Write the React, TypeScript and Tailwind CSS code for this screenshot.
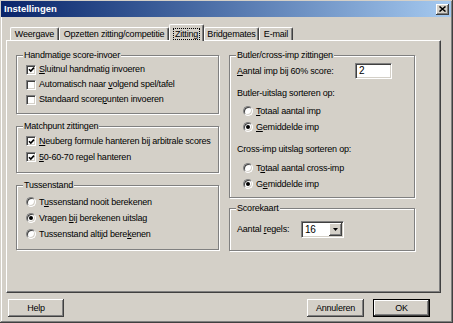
import type { ReactNode } from 'react';

function U({ children }: { children: ReactNode }) {
  return <span className="underline underline-offset-[1px] decoration-[1px]">{children}</span>;
}

function Check({ checked, children }: { checked?: boolean; children: ReactNode }) {
  return (
    <div className="flex items-center h-[15px] gap-[3px]">
      <span className="w-[10px] h-[10px] bg-white border border-t-[#808080] border-l-[#808080] border-b-white border-r-white shadow-[inset_1px_1px_0_#404040,inset_-1px_-1px_0_#d4d0c8] flex items-center justify-center shrink-0">
        {checked && (
          <svg width="7" height="7" viewBox="0 0 7 7">
            <path d="M1 3.2 L2.8 5 L6 1.6" fill="none" stroke="#000" strokeWidth={1.6} />
          </svg>
        )}
      </span>
      <span>{children}</span>
    </div>
  );
}

function Radio({ checked, children }: { checked?: boolean; children: ReactNode }) {
  return (
    <div className="flex items-center h-[16px] gap-[3px]">
      <span className="w-[10px] h-[10px] rounded-full bg-white border border-t-[#808080] border-l-[#808080] border-b-white border-r-white shadow-[inset_1px_1px_0_#404040,inset_-1px_-1px_0_#d4d0c8] flex items-center justify-center shrink-0">
        {checked && <span className="w-[4px] h-[4px] rounded-full bg-black" />}
      </span>
      <span>{children}</span>
    </div>
  );
}

function Group({ title, className, children }: { title: string; className: string; children: ReactNode }) {
  return (
    <div className={`relative border border-[#808080] shadow-[inset_1px_1px_0_#fff,1px_1px_0_#fff] ${className}`}>
      <span className="absolute left-[6px] -top-[6px] leading-[10px] px-[1px] bg-[#d4d0c8]">{title}</span>
      {children}
    </div>
  );
}

function Tab({ label, width, active }: { label: string; width: string; active?: boolean }) {
  if (active) {
    return (
      <div
        className={`relative z-10 h-[17px] -mb-[1px] bg-[#d4d0c8] border-l border-t border-white border-r border-r-[#404040] shadow-[inset_-1px_0_0_#808080] rounded-t-[2px] flex items-start justify-center pt-[3px] ${width}`}
      >
        <span className="border border-dotted border-black px-[1px] leading-[10px]">{label}</span>
      </div>
    );
  }
  return (
    <div
      className={`h-[13px] border-l border-t border-white border-r border-r-[#404040] shadow-[inset_-1px_0_0_#808080] rounded-t-[2px] flex items-center justify-center ${width}`}
    >
      {label}
    </div>
  );
}

function Btn({ children, isDefault, width }: { children: ReactNode; isDefault?: boolean; width: string }) {
  return (
    <div className={`h-[18px] ${width} ${isDefault ? 'border border-black' : ''}`}>
      <div className="w-full h-full flex items-center justify-center shadow-[inset_-1px_-1px_0_#404040,inset_1px_1px_0_#fff,inset_-2px_-2px_0_#808080,inset_2px_2px_0_#d4d0c8]">
        {children}
      </div>
    </div>
  );
}

export default function App() {
  return (
    <div className="w-[453px] h-[323px] bg-[#d4d0c8] font-['Liberation_Sans',Arial,sans-serif] text-[9px] tracking-[-0.2px] text-black leading-none shadow-[inset_-1px_-1px_0_#404040,inset_1px_1px_0_#d4d0c8,inset_-2px_-2px_0_#808080,inset_2px_2px_0_#fff] flex flex-col pt-[1px] px-[1px] overflow-hidden">
      {/* Title bar */}
      <div className="h-[16px] mr-[1px] flex items-center justify-between bg-gradient-to-r from-[#0a246a] to-[#a6caf0] pl-[3px] pr-[2px]">
        <span className="text-white font-bold text-[9.5px] tracking-[0px]">Instellingen</span>
        <div className="w-[13px] h-[11px] bg-[#d4d0c8] flex items-center justify-center shadow-[inset_-1px_-1px_0_#404040,inset_1px_1px_0_#fff,inset_-2px_-2px_0_#808080]">
          <svg width="7" height="6" viewBox="0 0 7 6">
            <path d="M0.5 0.5 L6.5 5.5 M6.5 0.5 L0.5 5.5" stroke="#000" strokeWidth={1.5} />
          </svg>
        </div>
      </div>

      {/* Tabs */}
      <div className="mt-[7px] h-[16px] flex items-end pl-[9px]">
        <Tab label="Weergave" width="w-[49px]" />
        <Tab label="Opzetten zitting/competitie" width="w-[110px]" />
        <Tab label="Zitting" width="w-[35px]" active />
        <Tab label="Bridgemates" width="w-[55px]" />
        <Tab label="E-mail" width="w-[34px]" />
      </div>

      {/* Panel */}
      <div className="ml-[5px] w-[435px] h-[253px] border-l border-t border-white border-r border-b border-r-[#404040] border-b-[#404040] shadow-[inset_-1px_-1px_0_#808080] flex gap-[10px] pl-[9px] pt-[14px]">
        {/* Left column */}
        <div className="w-[203px] flex flex-col gap-[12px]">
          <Group title="Handmatige score-invoer" className="h-[59px] pt-[6px] pl-[9px]">
            <Check checked>
              <U>S</U>luitnul handmatig invoeren
            </Check>
            <Check>
              Automatisch naar <U>v</U>olgend spel/tafel
            </Check>
            <Check>
              Standaard score<U>p</U>unten invoeren
            </Check>
          </Group>
          <Group title="Matchpunt zittingen" className="h-[47px] pt-[6px] pl-[9px]">
            <div className="flex flex-col [&>div]:h-[16px]">
              <Check checked>
                <U>N</U>euberg formule hanteren bij arbitrale scores
              </Check>
              <Check checked>
                <U>5</U>0-60-70 regel hanteren
              </Check>
            </div>
          </Group>
          <Group title="Tussenstand" className="h-[65px] pt-[8px] pl-[9px]">
            <Radio>
              T<U>u</U>ssenstand nooit berekenen
            </Radio>
            <Radio checked>
              Vragen <U>b</U>ij berekenen uitslag
            </Radio>
            <Radio>
              Tussenstand altijd bere<U>k</U>enen
            </Radio>
          </Group>
        </div>

        {/* Right column */}
        <div className="w-[186px] flex flex-col gap-[10px]">
          <Group title="Butler/cross-imp zittingen" className="h-[143px] pl-[7px] flex flex-col">
            <div className="mt-[7px] h-[16px] flex items-center">
              <span className="w-[118px]">
                <U>A</U>antal imp bij 60% score:
              </span>
              <div className="w-[37px] h-[16px] bg-white border border-t-[#808080] border-l-[#808080] border-b-white border-r-white shadow-[inset_1px_1px_0_#404040,inset_-1px_-1px_0_#d4d0c8] flex items-center pl-[3px] text-[10px]">
                2
              </div>
            </div>
            <div className="mt-[6px] h-[16px] flex items-center">Butler-uitslag sorteren op:</div>
            <div className="mt-[2px] pl-[6px]">
              <Radio>
                <U>T</U>otaal aantal imp
              </Radio>
              <Radio checked>
                <U>G</U>emiddelde imp
              </Radio>
            </div>
            <div className="mt-[6px] h-[16px] flex items-center">Cross-imp uitslag sorteren op:</div>
            <div className="mt-[3px] pl-[6px]">
              <Radio>
                T<U>o</U>taal aantal cross-imp
              </Radio>
              <Radio checked>
                G<U>e</U>middelde imp
              </Radio>
            </div>
          </Group>
          <Group title="Scorekaart" className="h-[43px] pl-[7px]">
            <div className="mt-[12px] h-[17px] flex items-center">
              <span className="w-[64px]">
                Aantal <U>r</U>egels:
              </span>
              <div className="w-[43px] h-[17px] bg-white border border-t-[#808080] border-l-[#808080] border-b-white border-r-white shadow-[inset_1px_1px_0_#404040,inset_-1px_-1px_0_#d4d0c8] flex items-center justify-between pl-[3px] pr-[1px] text-[10px]">
                <span>16</span>
                <div className="w-[13px] h-[13px] bg-[#d4d0c8] flex items-center justify-center shadow-[inset_-1px_-1px_0_#404040,inset_1px_1px_0_#fff,inset_-2px_-2px_0_#808080]">
                  <svg width="5" height="3" viewBox="0 0 5 3">
                    <path d="M0 0 H5 L2.5 3 Z" fill="#000" />
                  </svg>
                </div>
              </div>
            </div>
          </Group>
        </div>
      </div>

      {/* Buttons */}
      <div className="mt-[6px] flex items-start pl-[7px] pr-[22px]">
        <Btn width="w-[56px]">Help</Btn>
        <div className="ml-auto flex gap-[9px]">
          <Btn width="w-[57px]">Annuleren</Btn>
          <Btn width="w-[57px]" isDefault>
            OK
          </Btn>
        </div>
      </div>
    </div>
  );
}
